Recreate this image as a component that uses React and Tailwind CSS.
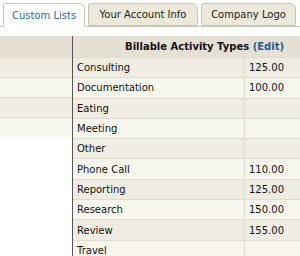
import React from "react";

const rows = [
  ["Consulting", "125.00"],
  ["Documentation", "100.00"],
  ["Eating", ""],
  ["Meeting", ""],
  ["Other", ""],
  ["Phone Call", "110.00"],
  ["Reporting", "125.00"],
  ["Research", "150.00"],
  ["Review", "155.00"],
  ["Travel", ""],
];

function Tab({ label, active, width }) {
  return (
    <div
      className={
        "h-[23px] flex items-center justify-center border border-[#c9c6b8] rounded-tr-[6px] rounded-tl-[2px] text-[10px] " +
        (active
          ? "bg-white text-[#2a6aa0] border-b-white h-[24px]"
          : "bg-[#ece9da] text-[#222]")
      }
      style={{ width }}
    >
      {label}
    </div>
  );
}

export default function App() {
  return (
    <div
      className="w-[300px] h-[256px] overflow-hidden bg-white"
      style={{ fontFamily: '"DejaVu Sans", Verdana, sans-serif' }}
    >
      <div className="relative h-[27px] pt-[3px] flex items-start">
        <div className="absolute left-0 right-0 top-[26px] h-px bg-[#c9c6b8]" />
        <div className="w-[3px]" />
        <div className="relative z-10 flex gap-[3px]">
          <Tab label="Custom Lists" active width={82} />
          <Tab label="Your Account Info" width={110} />
          <Tab label="Company Logo" width={95} />
        </div>
      </div>
      <div className="h-[9px]" />
      <div className="flex">
        <div className="w-[72px] shrink-0">
          <div className="h-[21px] bg-[#e4e0d4]" />
          {[0, 1, 2, 3].map((i) => (
            <div
              key={i}
              className={
                "h-[20px] border-t border-[#dedbcf] " +
                (i % 2 === 0 ? "bg-[#efede2]" : "bg-[#f7f6ec]")
              }
            />
          ))}
        </div>
        <div className="w-px bg-[#555] shrink-0 h-[230px]" />
        <div className="flex-1">
          <div className="h-[21px] bg-[#e4e0d4] flex items-center justify-end pr-[16px] text-[10px] font-bold text-[#111]">
            Billable Activity Types&nbsp;<span className="text-[#1e5c94]">(Edit)</span>
          </div>
          {rows.map(([name, val], i) => (
            <div
              key={name}
              className={
                "h-[20.3px] flex border-t border-[#dedbcf] text-[10px] text-[#111] " +
                (i % 2 === 0 ? "bg-[#efede2]" : "bg-[#f7f6ec]")
              }
            >
              <div className="w-[172px] pl-[4px] flex items-center border-r border-[#dedbcf]">
                {name}
              </div>
              <div className="flex-1 pl-[4px] flex items-center">{val}</div>
            </div>
          ))}
        </div>
      </div>
    </div>
  );
}
